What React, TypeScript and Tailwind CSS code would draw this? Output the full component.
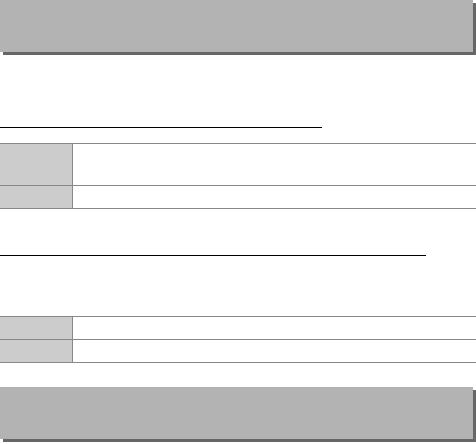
export default function App() {
  const Row = ({ h }: { h: string }) => (
    <div className={`flex border-b border-[#888888] ${h}`}>
      <div className="w-[73px] shrink-0 bg-[#cccccc] border-r border-[#888888]" />
      <div className="flex-1 bg-white" />
    </div>
  );

  return (
    <div className="w-[476px] h-[444px] bg-white flex flex-col" style={{ fontFamily: '"Liberation Sans", sans-serif' }}>
      {/* heading bar */}
      <div className="h-[52px] w-[473px] shrink-0 bg-[#b3b3b3] shadow-[3px_3px_0_#666666]" />

      <div className="mt-[75px] h-px w-[322px] bg-black" />

      <div className="mt-[15px] border-t border-[#888888]">
        <div className="flex border-b border-[#888888] h-[42px]">
          <div className="w-[73px] shrink-0 bg-[#cccccc] border-r border-[#888888]" />
          <div className="flex-1" />
        </div>
        <div className="flex border-b border-[#888888] h-[23px]">
          <div className="w-[73px] shrink-0 bg-[#cccccc] border-r border-[#888888]" />
          <div className="flex-1" />
        </div>
      </div>

      <div className="mt-[46px] h-px w-[426px] bg-black" />

      <div className="mt-[60px] border-t border-[#888888]">
        <Row h="h-[23px]" />
        <Row h="h-[23px]" />
      </div>

      {/* footer bar */}
      <div className="mt-[24px] h-[52px] w-[473px] shrink-0 bg-[#b3b3b3] shadow-[3px_3px_0_#666666]" />
    </div>
  );
}
